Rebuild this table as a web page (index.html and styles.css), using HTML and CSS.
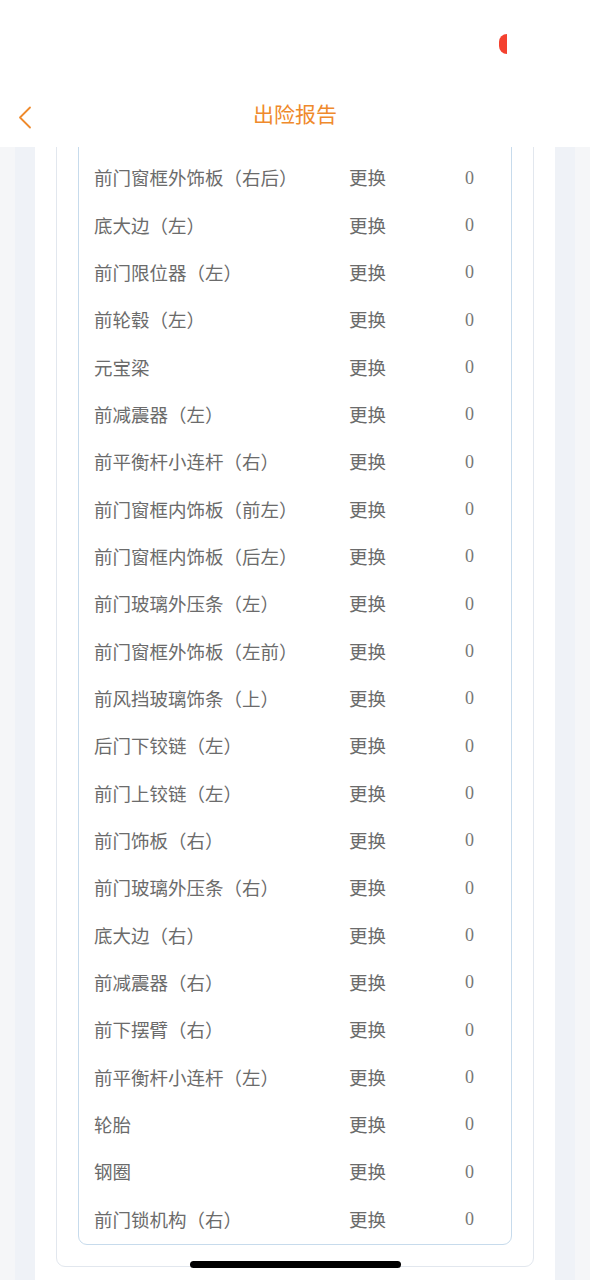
FILE: index.html
```html
<!DOCTYPE html>
<html lang="zh">
<head>
<meta charset="utf-8">
<title>出险报告</title>
<link rel="stylesheet" href="styles.css">
</head>
<body>
<header class="header">
  <div class="status-bar"><span class="status-pill"></span></div>
  <nav class="nav-bar">
    <svg class="back" width="14" height="23" viewBox="0 0 14 23"><polyline points="12,1.5 2,11.5 12,21.5" fill="none" stroke="#ef8a2c" stroke-width="1.8" stroke-linecap="round" stroke-linejoin="round"/></svg>
    <h1 class="title">出险报告</h1>
    <span class="nav-spacer"></span>
  </nav>
</header>
<main class="viewport">
  <div class="side">
    <div class="page">
      <section class="outer-card">
        <div class="inner-card">
          <div class="row"><span class="name">前门窗框外饰板（右后）</span><span class="op">更换</span><span class="num">0</span></div>
          <div class="row"><span class="name">底大边（左）</span><span class="op">更换</span><span class="num">0</span></div>
          <div class="row"><span class="name">前门限位器（左）</span><span class="op">更换</span><span class="num">0</span></div>
          <div class="row"><span class="name">前轮毂（左）</span><span class="op">更换</span><span class="num">0</span></div>
          <div class="row"><span class="name">元宝梁</span><span class="op">更换</span><span class="num">0</span></div>
          <div class="row"><span class="name">前减震器（左）</span><span class="op">更换</span><span class="num">0</span></div>
          <div class="row"><span class="name">前平衡杆小连杆（右）</span><span class="op">更换</span><span class="num">0</span></div>
          <div class="row"><span class="name">前门窗框内饰板（前左）</span><span class="op">更换</span><span class="num">0</span></div>
          <div class="row"><span class="name">前门窗框内饰板（后左）</span><span class="op">更换</span><span class="num">0</span></div>
          <div class="row"><span class="name">前门玻璃外压条（左）</span><span class="op">更换</span><span class="num">0</span></div>
          <div class="row"><span class="name">前门窗框外饰板（左前）</span><span class="op">更换</span><span class="num">0</span></div>
          <div class="row"><span class="name">前风挡玻璃饰条（上）</span><span class="op">更换</span><span class="num">0</span></div>
          <div class="row"><span class="name">后门下铰链（左）</span><span class="op">更换</span><span class="num">0</span></div>
          <div class="row"><span class="name">前门上铰链（左）</span><span class="op">更换</span><span class="num">0</span></div>
          <div class="row"><span class="name">前门饰板（右）</span><span class="op">更换</span><span class="num">0</span></div>
          <div class="row"><span class="name">前门玻璃外压条（右）</span><span class="op">更换</span><span class="num">0</span></div>
          <div class="row"><span class="name">底大边（右）</span><span class="op">更换</span><span class="num">0</span></div>
          <div class="row"><span class="name">前减震器（右）</span><span class="op">更换</span><span class="num">0</span></div>
          <div class="row"><span class="name">前下摆臂（右）</span><span class="op">更换</span><span class="num">0</span></div>
          <div class="row"><span class="name">前平衡杆小连杆（左）</span><span class="op">更换</span><span class="num">0</span></div>
          <div class="row"><span class="name">轮胎</span><span class="op">更换</span><span class="num">0</span></div>
          <div class="row"><span class="name">钢圈</span><span class="op">更换</span><span class="num">0</span></div>
          <div class="row"><span class="name">前门锁机构（右）</span><span class="op">更换</span><span class="num">0</span></div>
        </div>
      </section>
    </div>
  </div>
  <div class="home-indicator"></div>
</main>
</body>
</html>
```

FILE: styles.css
```css
* { box-sizing: border-box; }
html, body { margin: 0; padding: 0; }
body {
  width: 590px;
  height: 1280px;
  overflow: hidden;
  background: #f5f6f8;
  font-family: "Noto Sans CJK SC", "Noto Sans", sans-serif;
}
.header {
  height: 147px;
  background: #fff;
  position: relative;
  z-index: 2;
}
.status-bar {
  height: 88px;
  display: flex;
  justify-content: flex-end;
  padding-top: 34px;
  padding-right: 83px;
}
.status-pill {
  width: 8px;
  height: 20px;
  background: #f4412f;
  border-radius: 8px 0 0 8px;
}
.nav-bar {
  height: 50px;
  display: flex;
  align-items: center;
  justify-content: space-between;
  padding: 0 18px;
}
.back { margin-top: 9px; }
.title {
  margin: 0;
  font-size: 21px;
  font-weight: 400;
  color: #ef8a2c;
  line-height: 50px;
}
.nav-spacer { width: 14px; }
.viewport {
  height: 1133px;
  overflow: hidden;
  position: relative;
}
.side {
  height: 100%;
  margin: 0 15px;
  background: #eff2f7;
}
.page {
  display: flow-root;
  height: 100%;
  margin: 0 20px;
  background: #fff;
  padding: 0 21px;
}
.outer-card {
  margin-top: -40px;
  border: 1px solid #e2e7ee;
  border-radius: 9px;
  padding: 21px;
}
.inner-card {
  border: 1px solid #c7dbec;
  border-radius: 9px;
  padding: 24px 0 1px 15px;
}
.row {
  height: 47.33px;
  display: grid;
  grid-template-columns: 255px 116px auto;
  align-items: center;
  font-size: 18.5px;
  color: #6b6b6b;
}
.name, .op { line-height: 1; }
.num {
  font-family: "Liberation Serif", serif;
  font-size: 18px;
  color: #777;
  line-height: 1;
}
.home-indicator {
  position: absolute;
  left: 190px;
  top: 1114px;
  width: 211px;
  height: 7px;
  border-radius: 4px;
  background: #000;
}
```
